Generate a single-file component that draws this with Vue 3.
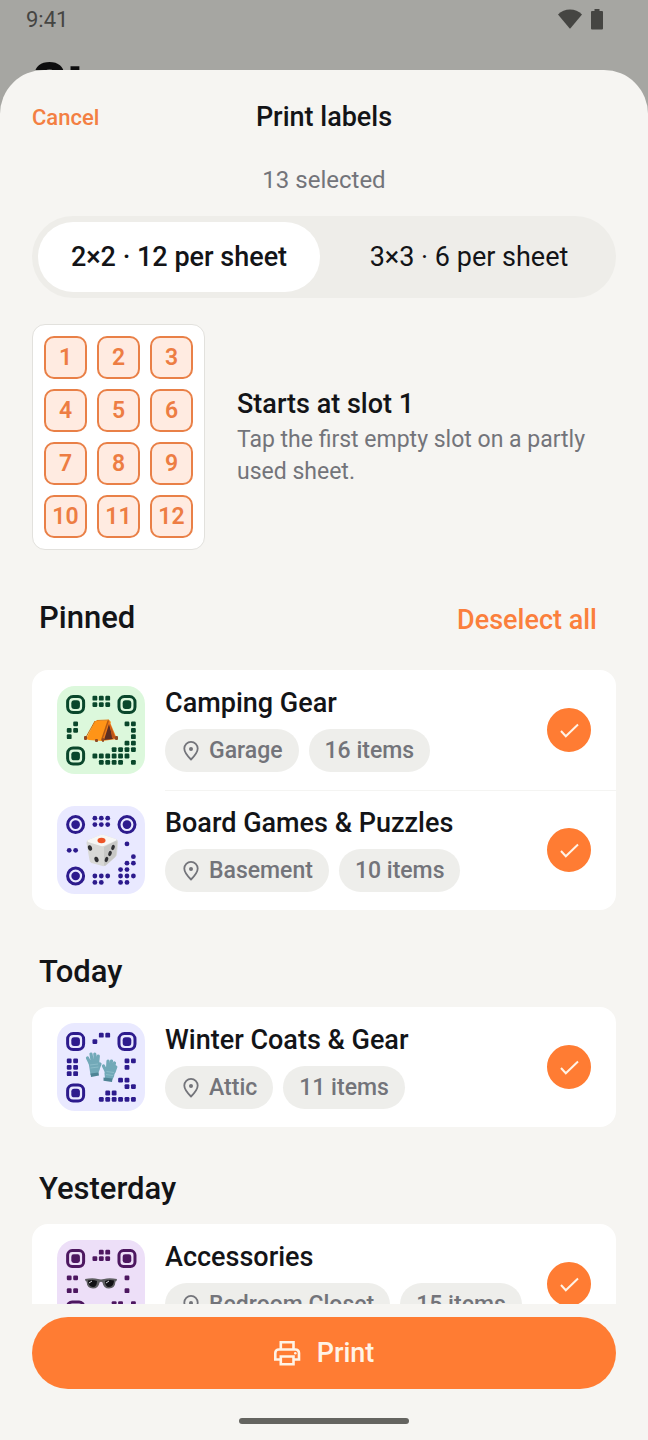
<script setup>
import { computed, ref } from 'vue'

const layouts = ['2×2 · 12 per sheet', '3×3 · 6 per sheet']
const layout = ref(0)
const firstSlot = ref(1)

const sections = ref([
  {
    title: 'Pinned',
    boxes: [
      {
        name: 'Camping Gear', place: 'Garage', count: 16, picture: 'tent', tone: 'green', finder: 5.5, dot: 1.2, selected: true,
        dots: { 0: [4, 5, 6], 1: [4, 5, 6], 4: [1, 9, 10], 5: [0, 1, 10], 6: [0, 10], 7: [9, 10], 8: [7, 8, 9, 10], 9: [4, 5, 6, 7, 8, 9], 10: [5, 6, 7, 8, 10] }
      },
      {
        name: 'Board Games & Puzzles', place: 'Basement', count: 10, picture: 'die', tone: 'blue', finder: 8, dot: 2.4, selected: true,
        dots: { 0: [4, 5, 6], 1: [4, 5, 6], 4: [9], 5: [0, 1], 6: [10], 7: [9, 10], 8: [8, 9], 9: [4, 5, 6, 8, 9, 10], 10: [4, 5, 8, 9] }
      }
    ]
  },
  {
    title: 'Today',
    boxes: [
      {
        name: 'Winter Coats & Gear', place: 'Attic', count: 11, picture: 'gloves', tone: 'blue', finder: 5.5, dot: 1.2, selected: true,
        dots: { 0: [5, 6], 1: [4], 4: [0, 1, 9, 10], 5: [0, 1, 9], 6: [0, 1], 7: [8, 9], 8: [9, 10], 9: [6, 7], 10: [5, 6, 7, 8, 9, 10] }
      }
    ]
  },
  {
    title: 'Yesterday',
    boxes: [
      {
        name: 'Accessories', place: 'Bedroom Closet', count: 15, picture: 'shades', tone: 'purple', finder: 4.5, dot: 1.2, selected: true,
        dots: { 0: [5, 6], 1: [4, 5, 6], 4: [0, 1, 9], 6: [0, 1, 9], 8: [7, 8, 10], 9: [4, 5, 8], 10: [5, 6, 9] }
      }
    ]
  }
])

const allSelected = computed(() => sections.value.every(s => s.boxes.every(b => b.selected)))

function toggleAll() {
  const next = !allSelected.value
  sections.value.forEach(s => s.boxes.forEach(b => { b.selected = next }))
}

const at = n => 12.2 + n * 6.42
const finders = [[1, 1], [9, 1], [1, 9]]

function cells(dots) {
  return Object.entries(dots).flatMap(([row, cols]) => cols.map(col => ({ key: row + '-' + col, x: at(col), y: at(Number(row)) })))
}
</script>

<template>
  <div class="screen">
    <div class="backdrop">
      <div class="status">
        <span>9:41</span>
        <span class="status-icons">
          <svg width="24" height="20" viewBox="0 0 24 20" aria-hidden="true"><path d="M0 5.5Q5 .6 12 .6T24 5.5L12.3 19.4h-.6Z" fill="#454542" /></svg>
          <svg width="12" height="21" viewBox="0 0 12 21" aria-hidden="true"><path d="M3.5 0h5v2H11a1 1 0 0 1 1 1v16.5a1 1 0 0 1-1 1H1a1 1 0 0 1-1-1V3a1 1 0 0 1 1-1h2.5Z" fill="#454542" /></svg>
        </span>
      </div>
      <div class="behind">St</div>
    </div>

    <main class="sheet">
      <header class="bar">
        <button class="cancel" type="button">Cancel</button>
        <h1>Print labels</h1>
      </header>

      <div class="scroller">
        <p class="selected-count">13 selected</p>

        <div class="segments" role="group" aria-label="Label layout">
          <button
            v-for="(label, i) in layouts" :key="label" type="button"
            :class="['segment', { on: layout === i }]" :aria-pressed="layout === i" @click="layout = i"
          >{{ label }}</button>
        </div>

        <section class="start">
          <div class="paper">
            <button
              v-for="n in 12" :key="n" type="button"
              :class="['slot', { used: n < firstSlot }]" @click="firstSlot = n"
            >{{ n }}</button>
          </div>
          <div class="start-text">
            <h2>Starts at slot {{ firstSlot }}</h2>
            <p>Tap the first empty slot on a partly used sheet.</p>
          </div>
        </section>

        <section v-for="(section, s) in sections" :key="section.title" class="group">
          <div :class="['group-head', { first: s === 0 }]">
            <h2>{{ section.title }}</h2>
            <button v-if="s === 0" type="button" class="all" @click="toggleAll">{{ allSelected ? 'Deselect all' : 'Select all' }}</button>
          </div>
          <ul class="card">
            <li v-for="box in section.boxes" :key="box.name" class="row">
              <svg :class="['code', box.tone]" width="88" height="88" viewBox="0 0 88 88" aria-hidden="true">
                <rect class="tile" width="88" height="88" rx="18" />
                <g v-for="([c, r], i) in finders" :key="i">
                  <rect class="ring" :x="at(c) - 8" :y="at(r) - 8" width="16" height="16" :rx="box.finder" />
                  <rect class="ink" :x="at(c) - 4.3" :y="at(r) - 4.3" width="8.6" height="8.6" :rx="box.finder / 1.9" />
                </g>
                <rect
                  v-for="d in cells(box.dots)" :key="d.key" class="ink"
                  :x="d.x - 2.4" :y="d.y - 2.4" width="4.8" height="4.8" :rx="box.dot"
                />

                <g v-if="box.picture === 'tent'">
                  <path d="M38 35 29 53l3 1 13 1L54 36l-2-2Z" fill="#ff9417" />
                  <path d="M38 35 28 53" stroke="#c86f16" stroke-width="1" />
                  <path d="m52 34 8 19-15 2Z" fill="#f17b18" />
                  <path d="M52 38 47 54l9-1Z" fill="#5b2e23" />
                  <path d="m51.5 34-7 20.5" stroke="#b55a13" stroke-width="1.5" />
                  <path d="m53 38 2 14 4 1Z" fill="#bd5519" />
                  <path d="M39.5 34.5 52 34" stroke="#df7a13" stroke-width="1" />
                  <g fill="#8e4a24"><rect x="27" y="50" width="3" height="4" rx="1" /><rect x="38" y="53" width="3" height="3" rx="1" /><rect x="45" y="52" width="2" height="4" rx="1" /><rect x="58" y="50" width="3" height="4" rx="1" /></g>
                </g>

                <g v-else-if="box.picture === 'die'">
                  <path d="M31 34q-1.5 1-1.5 3l3 17q0 2 2 3l11 3q2 .5 4-1l9-8q1.5-1.5 1.5-3l1-12q0-2-2-3l-12-4q-2-.5-4 0Z" fill="#d8d8d6" />
                  <path d="m31 34 12-5q2-.6 4 0l12 4q1 .7 0 1.5l-11 5q-2 1-4 .5L31 36q-1.5-1 0-2Z" fill="#f7f7f5" />
                  <path d="m47 41 12-6q1 0 1 1.5l-1 12q0 1.5-1.5 3l-9 8q-1.5 1-1.5-1Z" fill="#c7c7c5" />
                  <ellipse cx="44.5" cy="34.5" rx="4" ry="2.7" fill="#ed5427" />
                  <g fill="#303033"><ellipse cx="33" cy="42" rx="2" ry="2.8" transform="rotate(-20 33 42)" /><ellipse cx="39.5" cy="53.5" rx="2" ry="2.8" transform="rotate(-20 39.5 53.5)" /><ellipse cx="56" cy="41.5" rx="1.7" ry="2.7" transform="rotate(20 56 41.5)" /><ellipse cx="53" cy="47.5" rx="1.7" ry="2.7" transform="rotate(20 53 47.5)" /><ellipse cx="49.5" cy="53.5" rx="1.7" ry="2.7" transform="rotate(20 49.5 53.5)" /></g>
                </g>

                <g v-else-if="box.picture === 'gloves'" transform="translate(0 -2)">
                  <g fill="none" stroke="#72a9b8" stroke-width="3.2" stroke-linecap="round"><path d="m33.5 43-3-6M35.5 42l-1.5-9M38.300 41l-.5-8M40.500 43l.8-8M41 48l2-5" /><path d="m49 50-2.500-5M50.500 48l.5-8M53 48l1.500-8M55.500 49l2-7M57 51l1.800-5" /></g>
                  <path d="m31.5 41 10.5-1 .5 9-1.5 4-7.500 1Z" fill="#72a9b8" />
                  <path d="m48.5 47 10 1.500-1.500 7-1.500 3-7.500-1-.5-5Z" fill="#72a9b8" />
                  <path d="m33.5 52.5 8-1 .5 3-8 1.500ZM46.500 56.500l9 1-.5 3.500-8.500-1.200Z" fill="#4e8495" />
                  <path d="m33 44 8-1M33.500 47l8-1M49.500 50.500l7.500 1M49 53.500l7 1" stroke="#8bbcc8" stroke-width="1" />
                </g>

                <g v-else>
                  <path d="M28 39q8-1.5 13 0 3 .8 6 0 5-1.5 13 0l-.5 2-1 .5q-.5 7-6.500 7-5.500 0-6.500-6-1.500-1.500-3 0-1 6-6.500 6-6 0-6.500-7l-1-.5Z" fill="#5e5e61" />
                  <path d="M31 40.5q5-1 9 .5-.2 6-4 6-4.800 0-5-6.500ZM48 41q4-1.500 9-.5-.2 6.500-5 6.500-3.800 0-4-6Z" fill="#111114" />
                  <path d="m32 43 3-2M49 43l3-2" stroke="#d9d9dd" stroke-width="1" />
                </g>
              </svg>

              <div class="info">
                <h3>{{ box.name }}</h3>
                <div class="chips">
                  <span class="chip">
                    <svg width="18" height="22" viewBox="0 0 18 22" aria-hidden="true">
                      <path d="M10 19.5C6 15.5 3.3 12 3.3 8.5a6.7 6.7 0 0 1 13.4 0C16.700 12 14 15.500 10 19.500Z" fill="none" stroke="currentColor" stroke-width="1.8" stroke-linejoin="round" />
                      <circle cx="10" cy="9" r="2" fill="currentColor" />
                    </svg>
                    {{ box.place }}
                  </span>
                  <span class="chip">{{ box.count }} items</span>
                </div>
              </div>

              <label class="check">
                <input v-model="box.selected" type="checkbox" :aria-label="'Select ' + box.name">
                <svg width="44" height="44" viewBox="0 0 44 44" aria-hidden="true"><path d="m14 23 4.8 5.2L31 16.5" fill="none" stroke="#fff3e6" stroke-width="2" /></svg>
              </label>
            </li>
          </ul>
        </section>
      </div>

      <footer class="footer">
        <button type="button" class="print">
          <svg width="27" height="25" viewBox="0 0 27 25" fill="none" stroke="currentColor" stroke-width="2.6" aria-hidden="true">
            <path d="M6.8 8.5V1.3h12.7v7.2M6.8 18.500H1.300V12a3.500 3.500 0 0 1 3.500-3.500h16.700A3.500 3.500 0 0 1 25 12v6.500h-5.500M6.800 15.500h12.700v7.800H6.800Z" />
            <circle cx="21.3" cy="12.2" r="1.3" fill="currentColor" stroke="none" />
          </svg>
          Print
        </button>
        <div class="home"></div>
      </footer>
    </main>
  </div>
</template>

<style>
body { margin: 0; background: #f6f5f2; }
</style>

<style scoped>
.screen {
  display: flex;
  flex-direction: column;
  height: 100vh;
  background: #a6a6a2;
  color: #131417;
  font-family: Roboto, "Liberation Sans", sans-serif;
  overflow: hidden;
}
.screen * { box-sizing: border-box; }
h1, h2, h3, p, ul { margin: 0; padding: 0; font-weight: 500; }
button { border: 0; background: none; padding: 0; font: inherit; color: inherit; cursor: pointer; }

.backdrop { flex: none; height: 70px; overflow: hidden; }
.status {
  display: flex;
  justify-content: space-between;
  align-items: center;
  height: 38px;
  padding: 0 45px 0 26px;
  font-size: 22px;
  color: #454542;
}
.status-icons { display: flex; align-items: center; gap: 9px; }
.behind {
  padding: 13px 32px 0;
  font: 800 52px/64px Inter, Roboto, sans-serif;
  color: #0d0d0e;
}

.sheet {
  display: flex;
  flex: 1;
  flex-direction: column;
  min-height: 0;
  background: #f6f5f2;
  border-radius: 44px 44px 0 0;
}
.bar {
  display: grid;
  grid-template-columns: 1fr auto 1fr;
  align-items: center;
  flex: none;
  height: 94px;
  padding: 0 32px;
}
.cancel { justify-self: start; font-size: 22px; font-weight: 500; color: #f37f43; }
h1 { font-size: 27px; }

.scroller { flex: 1; min-height: 0; padding: 0 32px; overflow-y: auto; scrollbar-width: none; }
.selected-count { text-align: center; font-size: 24px; line-height: 32px; font-weight: 400; color: #73747a; }

.segments {
  display: grid;
  grid-template-columns: 1fr 1fr;
  gap: 8px;
  margin-top: 20px;
  padding: 6px;
  border-radius: 41px;
  background: #eeede9;
}
.segment { height: 70px; border-radius: 35px; font-size: 27px; }
.segment.on { background: #fff; font-weight: 500; }

.start { display: flex; align-items: center; gap: 32px; margin-top: 26px; }
.paper {
  display: grid;
  grid-template-columns: repeat(3, 43px);
  gap: 10px;
  padding: 11px;
  border: 1px solid #e2e1dd;
  border-radius: 13px;
  background: #fff;
}
.slot {
  height: 43px;
  border: 2px solid #e98047;
  border-radius: 10px;
  background: #ffebe1;
  color: #ed7d43;
  font-size: 23px;
  font-weight: 600;
}
.slot.used { border-color: #d5d4d0; background: #f6f5f2; color: #a0a0a4; }
.start-text { flex: 1; }
.start-text h2 { font-size: 27px; line-height: 36px; }
.start-text p { margin-top: 2px; font-size: 23px; line-height: 32px; font-weight: 400; color: #73747a; }

.group-head { display: flex; align-items: flex-end; justify-content: space-between; padding: 42px 19px 15px 7px; }
.group-head.first { padding-top: 48px; padding-bottom: 32px; }
.group-head h2 { font-size: 31px; line-height: 40px; }
.all { font-size: 27px; line-height: 36px; font-weight: 500; color: #fb7f3c; }

.card { list-style: none; border-radius: 16px; background: #fff; overflow: hidden; }
.row {
  display: grid;
  grid-template-columns: auto 1fr auto;
  align-items: center;
  column-gap: 20px;
  height: 120px;
  padding: 0 25px;
}
.row + .row {
  background: linear-gradient(#f4f4f2, #f4f4f2) 133px 0 / 100% 1px no-repeat;
}
.code { display: block; }
.green { --tile: #dcf8dc; --ink: #09472b; }
.blue { --tile: #e9e9ff; --ink: #2d1b8d; }
.purple { --tile: #eddff8; --ink: #4d1760; }
.tile { fill: var(--tile); }
.ink { fill: var(--ink); }
.ring { fill: none; stroke: var(--ink); stroke-width: 3; }

.info { display: grid; gap: 10px; min-width: 0; }
h3 { font-size: 27px; line-height: 31px; }
.chips { display: flex; gap: 10px; }
.chip {
  display: flex;
  align-items: center;
  gap: 10px;
  height: 43px;
  padding: 0 16px;
  border-radius: 22px;
  background: #eeeeeb;
  color: #73747a;
  font-size: 23px;
  font-weight: 500;
  white-space: nowrap;
}

.check { display: grid; }
.check input, .check svg { grid-area: 1 / 1; }
.check input {
  appearance: none;
  width: 44px;
  height: 44px;
  margin: 0;
  border: 2px solid #d0cfcb;
  border-radius: 50%;
  background: #fff;
}
.check input:checked { border-color: #ff7c33; background: #ff7c33; }
.check svg { pointer-events: none; }

.footer { flex: none; padding: 13px 32px 16px; background: #f6f5f2; }
.print {
  display: flex;
  align-items: center;
  justify-content: center;
  gap: 16px;
  width: 100%;
  height: 72px;
  border-radius: 36px;
  background: #ff7c33;
  color: #fff3e6;
  font-size: 27px;
  font-weight: 500;
}
.home { width: 170px; height: 6px; margin: 29px auto 0; border-radius: 3px; background: #646460; }
</style>
